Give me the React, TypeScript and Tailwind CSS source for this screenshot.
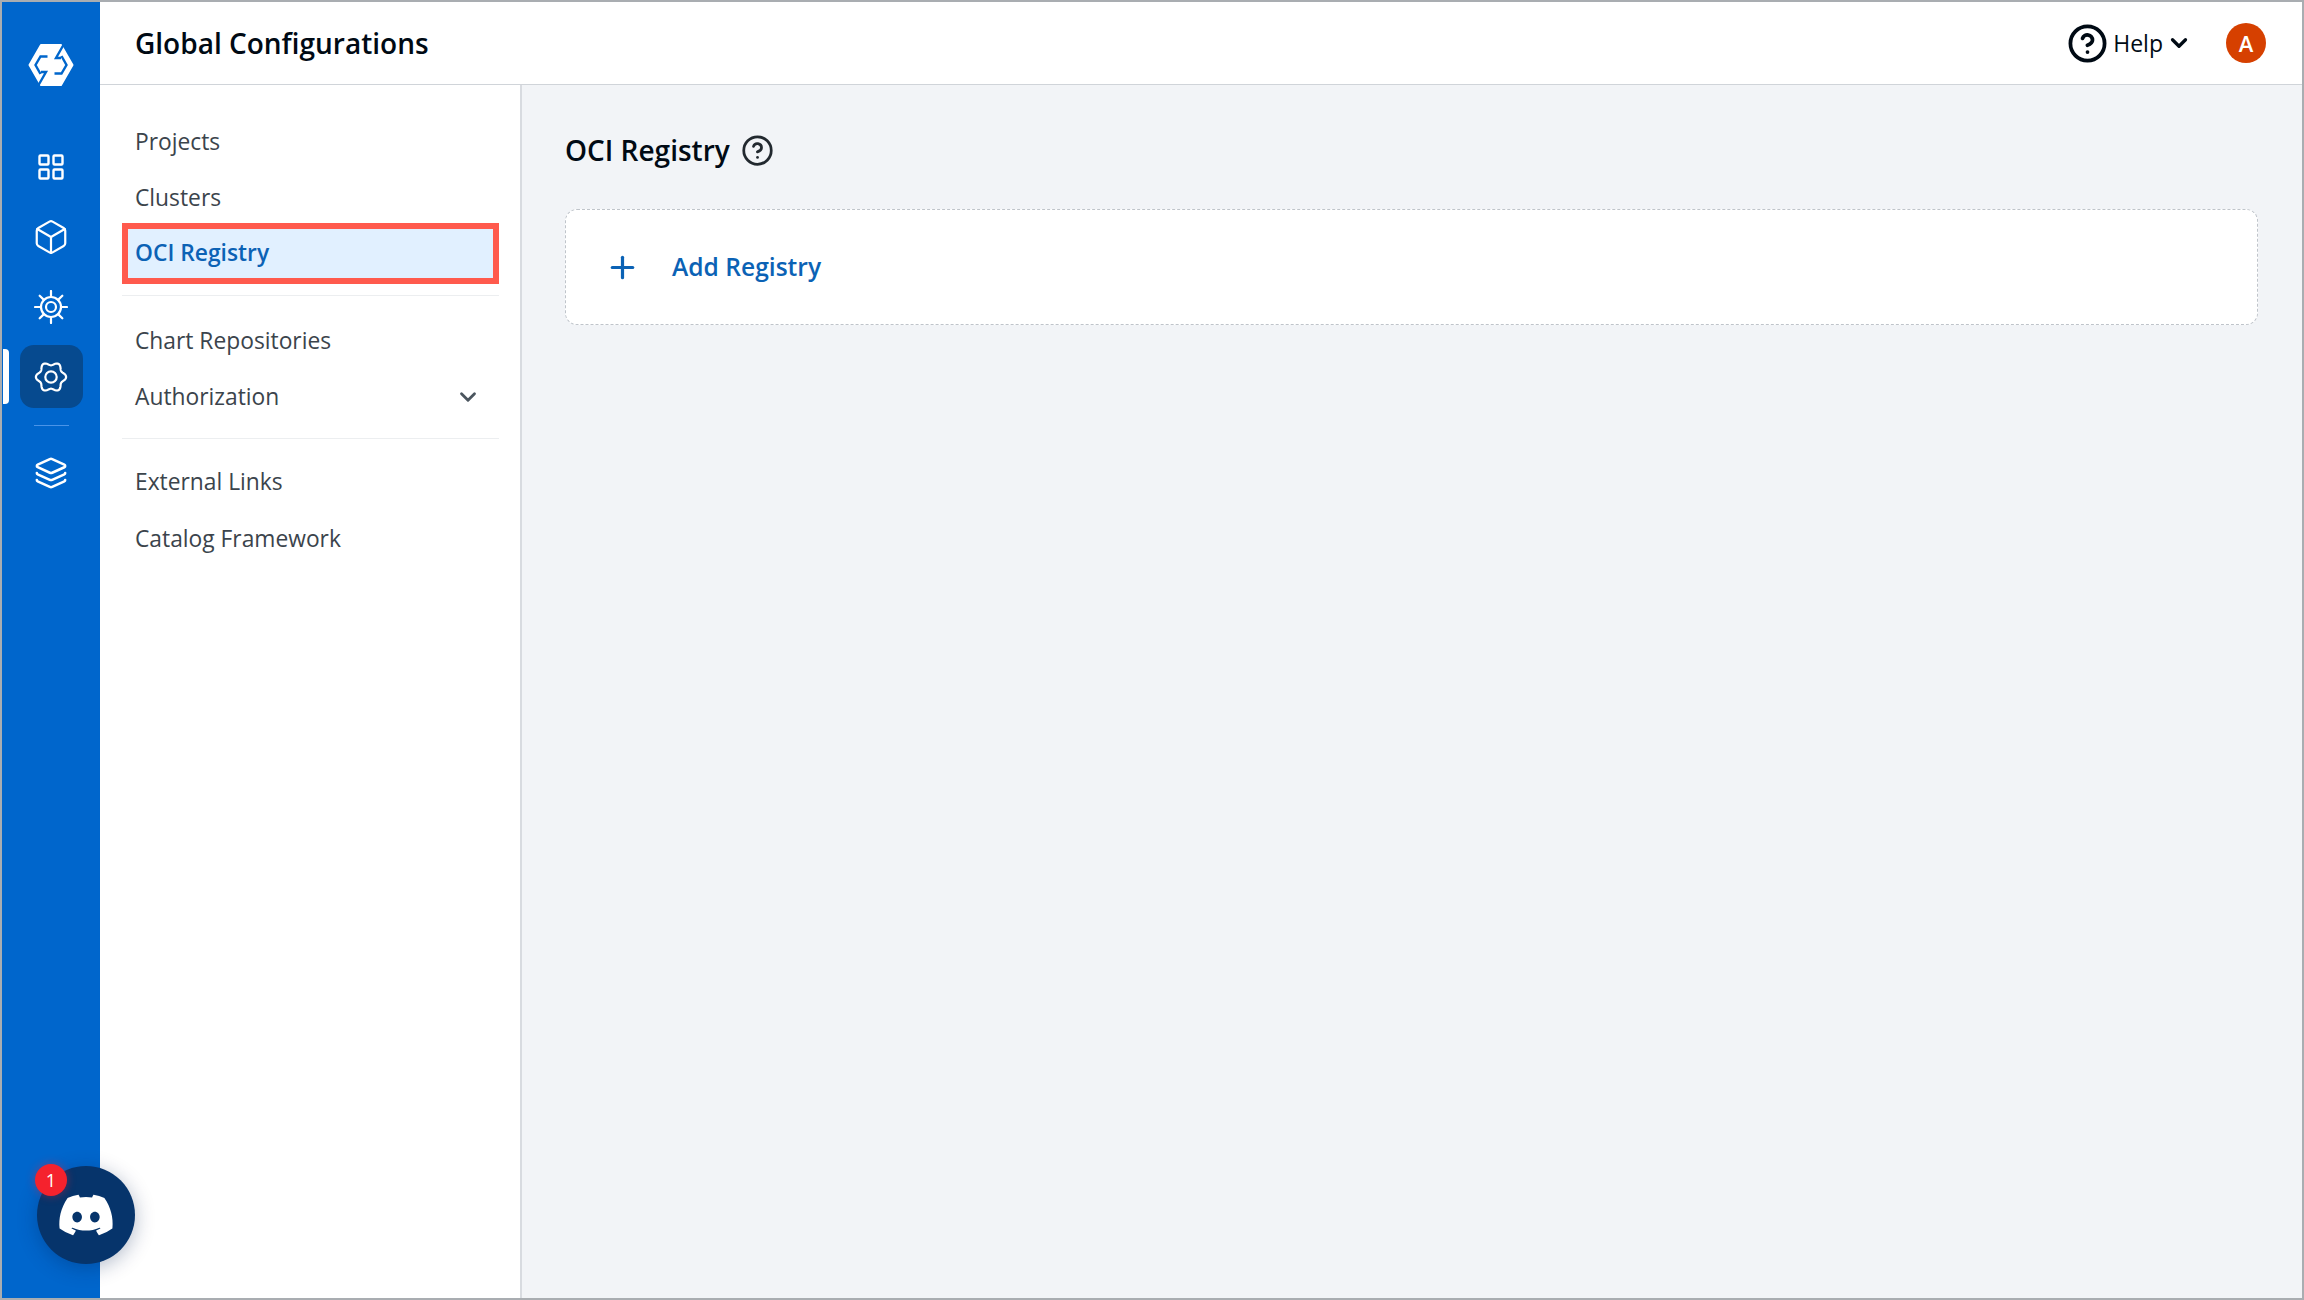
import { Box, ChevronDown, CircleHelp, Layers, Plus } from "lucide-react";
import { FaDiscord } from "react-icons/fa";

const font = { fontFamily: '"Open Sans", sans-serif' };

// six soft lobes, same outline as the rail's settings cog
const cogPath =
  Array.from({ length: 120 }, (_, i) => {
    const a = (i / 120) * Math.PI * 2;
    const r = 13.4 + 1.7 * Math.cos(6 * a);
    return `${i === 0 ? "M" : "L"}${(17 + r * Math.cos(a)).toFixed(2)} ${(17 + r * Math.sin(a)).toFixed(2)}`;
  }).join(" ") + " Z";

function Logo() {
  return (
    <svg viewBox="0 0 62 60" className="w-[62px] h-[60px]">
      <path d="M9.500 30 L21 10 L41 10 L52.500 30 L41 50 L21 50 Z" fill="white" stroke="white" strokeWidth="2" strokeLinejoin="round" />
      <g fill="none" stroke="#0066cc" strokeWidth="2.400">
        <path d="M44 9 L36 23 L41 23" />
        <path d="M41.500 21 L46.500 30 L41.500 38.500 L34.500 38.500" />
        <path d="M18 51 L26 37 L21 37" />
        <path d="M20.500 39 L15.500 30 L20.500 21.500 L27.500 21.500" />
      </g>
    </svg>
  );
}

function GridIcon() {
  return (
    <svg viewBox="0 0 26 26" className="w-[26px] h-[26px]" fill="none" stroke="white" strokeWidth="2.400">
      <rect x="1.500" y="1.500" width="9" height="9" rx="1" />
      <rect x="15.500" y="1.500" width="9" height="9" rx="1" />
      <rect x="1.500" y="15.500" width="9" height="9" rx="1" />
      <rect x="15.500" y="15.500" width="9" height="9" rx="1" />
    </svg>
  );
}

function SunGear() {
  return (
    <svg viewBox="0 0 34 34" className="w-[34px] h-[34px]" fill="none" stroke="white" strokeWidth="2.200" strokeLinecap="round">
      <circle cx="17" cy="17" r="10" />
      <circle cx="17" cy="17" r="5" />
      <path d="M17 1v6M17 27v6M1 17h6M27 17h6M5.700 5.700l4.200 4.200M24.100 24.100l4.200 4.200M5.700 28.300l4.200-4.200M24.100 9.900l4.200-4.200" />
    </svg>
  );
}

function GearIcon() {
  return (
    <svg viewBox="0 0 34 34" className="w-[34px] h-[34px]" fill="none" stroke="white" strokeWidth="2.200" strokeLinejoin="round">
      <path d={cogPath} />
      <circle cx="17" cy="17" r="5.700" />
    </svg>
  );
}

function NavItem({ label }: { label: string }) {
  return <div className="h-[56px] flex items-center pl-[13px] text-[#3b444c]">{label}</div>;
}

export default function App() {
  return (
    <div style={font} className="relative w-[2304px] h-[1300px] flex bg-[#f2f4f7] border-[2px] border-[#a9adb1] overflow-hidden">
      {/* Icon rail */}
      <aside className="w-[98px] shrink-0 bg-[#0066cc] flex flex-col items-center">
        <div className="h-[126px] w-full flex items-center justify-center">
          <Logo />
        </div>
        <div className="mt-[9px] h-[60px] flex items-center justify-center"><GridIcon /></div>
        <div className="mt-[10px] h-[60px] flex items-center justify-center">
          <Box size={38} color="white" strokeWidth={1.4} />
        </div>
        <div className="mt-[10px] h-[60px] flex items-center justify-center"><SunGear /></div>
        <div className="relative mt-[8px] w-[63px] h-[63px] rounded-[14px] bg-[#064a8f] flex items-center justify-center">
          <GearIcon />
          <div className="absolute left-[-17px] top-[4px] w-[6px] h-[55px] bg-white rounded-r-[4px]" />
        </div>
        <div className="mt-[17px] w-[35px] h-[1px] bg-[#4a94e8]" />
        <div className="mt-[17px] h-[60px] flex items-center justify-center">
          <Layers size={34} color="white" strokeWidth={1.8} />
        </div>
      </aside>

      <div className="flex-1 flex flex-col min-w-0">
        {/* Top bar */}
        <header className="h-[83px] shrink-0 bg-white border-b border-[#d0d4d9] flex items-center justify-between pl-[35px] pr-[36px]">
          <h1 className="text-[28px] font-semibold text-[#000a14]">Global Configurations</h1>
          <div className="flex items-center">
            <CircleHelp size={41} color="#000a14" strokeWidth={2.2} />
            <span className="ml-[5px] text-[23px] text-[#000a14]">Help</span>
            <ChevronDown size={26} color="#000a14" strokeWidth={3} className="ml-[3px]" />
            <div className="ml-[34px] w-[40px] h-[40px] rounded-full bg-[#d64000] text-white text-[22px] font-semibold flex items-center justify-center">A</div>
          </div>
        </header>

        <div className="flex-1 flex min-h-0">
          {/* Settings nav */}
          <nav className="w-[422px] shrink-0 bg-white border-r-[2px] border-[#d8dbe0] pt-[29px] pl-[22px] pr-[21px] text-[22.800px]">
            <NavItem label="Projects" />
            <NavItem label="Clusters" />
            <div className="-mt-[3px] h-[61px] border-[6px] border-[#ff5a4d] bg-[#e1f0ff] flex items-center pl-[7px] font-semibold text-[#0b62b5]">
              OCI Registry
            </div>
            <div className="mt-[11px] mb-[17px] h-[1px] bg-[#eceef0]" />
            <NavItem label="Chart Repositories" />
            <div className="h-[56px] flex items-center justify-between pl-[13px] pr-[18px] text-[#3b444c]">
              <span>Authorization</span>
              <ChevronDown size={26} color="#4b555e" strokeWidth={2.6} />
            </div>
            <div className="mt-[13px] mb-[15px] h-[1px] bg-[#eceef0]" />
            <div className="h-[57px] flex items-center pl-[13px] text-[#3b444c]">External Links</div>
            <NavItem label="Catalog Framework" />
          </nav>

          {/* Main content */}
          <main className="flex-1 pl-[43px] pr-[44px] pt-[45px]">
            <div className="flex items-center h-[40px] gap-[11px]">
              <h2 className="text-[28px] font-semibold text-[#000a14]">OCI Registry</h2>
              <CircleHelp size={33} color="#22292f" strokeWidth={2} />
            </div>
            <div className="mt-[39px] h-[116px] bg-white rounded-[12px] border border-dashed border-[#bfc4ca] flex items-center pl-[39px]">
              <Plus size={35} color="#0b62b5" strokeWidth={2.2} />
              <span className="ml-[32px] text-[24.600px] font-semibold text-[#0b62b5]">Add Registry</span>
            </div>
          </main>
        </div>
      </div>

      {/* Discord button */}
      <div className="absolute left-[35px] top-[1164px] w-[98px] h-[98px] rounded-full bg-[#06346b] shadow-[0_4px_20px_rgba(0,30,80,0.3)] flex items-center justify-center">
        <FaDiscord size={58} color="white" />
        <div className="absolute left-[-2px] top-[-2px] w-[32px] h-[32px] rounded-full bg-[#f5222d] text-white text-[18px] font-medium flex items-center justify-center shadow-[0_0_10px_rgba(245,34,45,0.4)]">1</div>
      </div>
    </div>
  );
}
